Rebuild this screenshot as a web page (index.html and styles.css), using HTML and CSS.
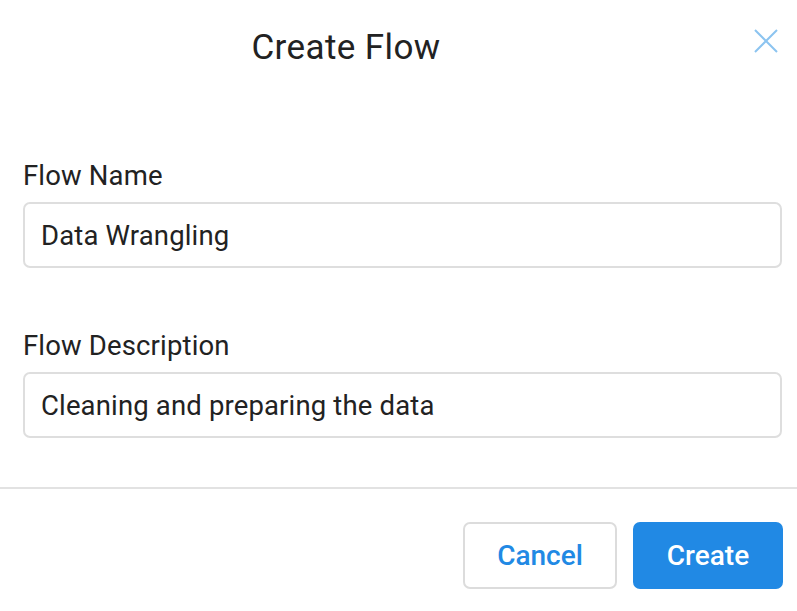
FILE: index.html
```html
<!DOCTYPE html>
<html>
<head>
<meta charset="utf-8">
<link rel="stylesheet" href="styles.css">
</head>
<body>
<div class="modal">
  <div class="header">
    <h1 class="title">Create Flow</h1>
    <button class="close" aria-label="Close">
      <svg width="24" height="24" viewBox="0 0 24 24"><path d="M1 1 L23 23 M23 1 L1 23" stroke="#8cc4f0" stroke-width="2" fill="none"/></svg>
    </button>
  </div>
  <div class="body">
    <div class="field">
      <label class="label">Flow Name</label>
      <div class="input">Data Wrangling</div>
    </div>
    <div class="field">
      <label class="label">Flow Description</label>
      <div class="input">Cleaning and preparing the data</div>
    </div>
  </div>
  <div class="footer">
    <button class="btn btn-cancel">Cancel</button>
    <button class="btn btn-create">Create</button>
  </div>
</div>
</body>
</html>
```
FILE: styles.css
```css
html, body {
  margin: 0;
  padding: 0;
  background: #fff;
}
body {
  font-family: Roboto, "Noto Sans", sans-serif;
  color: #222;
}
.modal {
  width: 797px;
}
.header {
  display: flex;
  align-items: flex-start;
  padding: 28px 19px 0 23px;
}
.title {
  flex: 1;
  margin: 0;
  font-size: 35px;
  line-height: 40px;
  font-weight: 400;
  letter-spacing: 0.4px;
  text-align: center;
  color: #222;
}
.close {
  margin-left: 85px;
  margin-top: 1px;
  width: 24px;
  height: 24px;
  padding: 0;
  border: none;
  background: none;
  display: flex;
}
.body {
  padding: 92px 15px 49px 23px;
  display: flex;
  flex-direction: column;
  gap: 62px;
  border-bottom: 2px solid #e2e2e2;
}
.field {
  display: flex;
  flex-direction: column;
  gap: 10px;
}
.label {
  font-size: 27.5px;
  line-height: 32px;
  letter-spacing: 0.15px;
  color: #222;
}
.input {
  height: 62px;
  border: 2px solid #dedede;
  border-radius: 7px;
  padding: 0 16px;
  display: flex;
  align-items: center;
  font-size: 27.5px;
  letter-spacing: 0.15px;
  color: #222;
}
.footer {
  display: flex;
  justify-content: flex-end;
  gap: 16px;
  padding: 33px 14px 0 0;
}
.btn {
  height: 67px;
  border-radius: 7px;
  font-family: Roboto, "Noto Sans", sans-serif;
  font-size: 28px;
  font-weight: 500;
}
.btn-cancel {
  width: 154px;
  background: #fff;
  border: 2px solid #dcdcdc;
  color: #2189e4;
}
.btn-create {
  width: 150px;
  background: #2189e4;
  border: none;
  color: #fff;
}
```
